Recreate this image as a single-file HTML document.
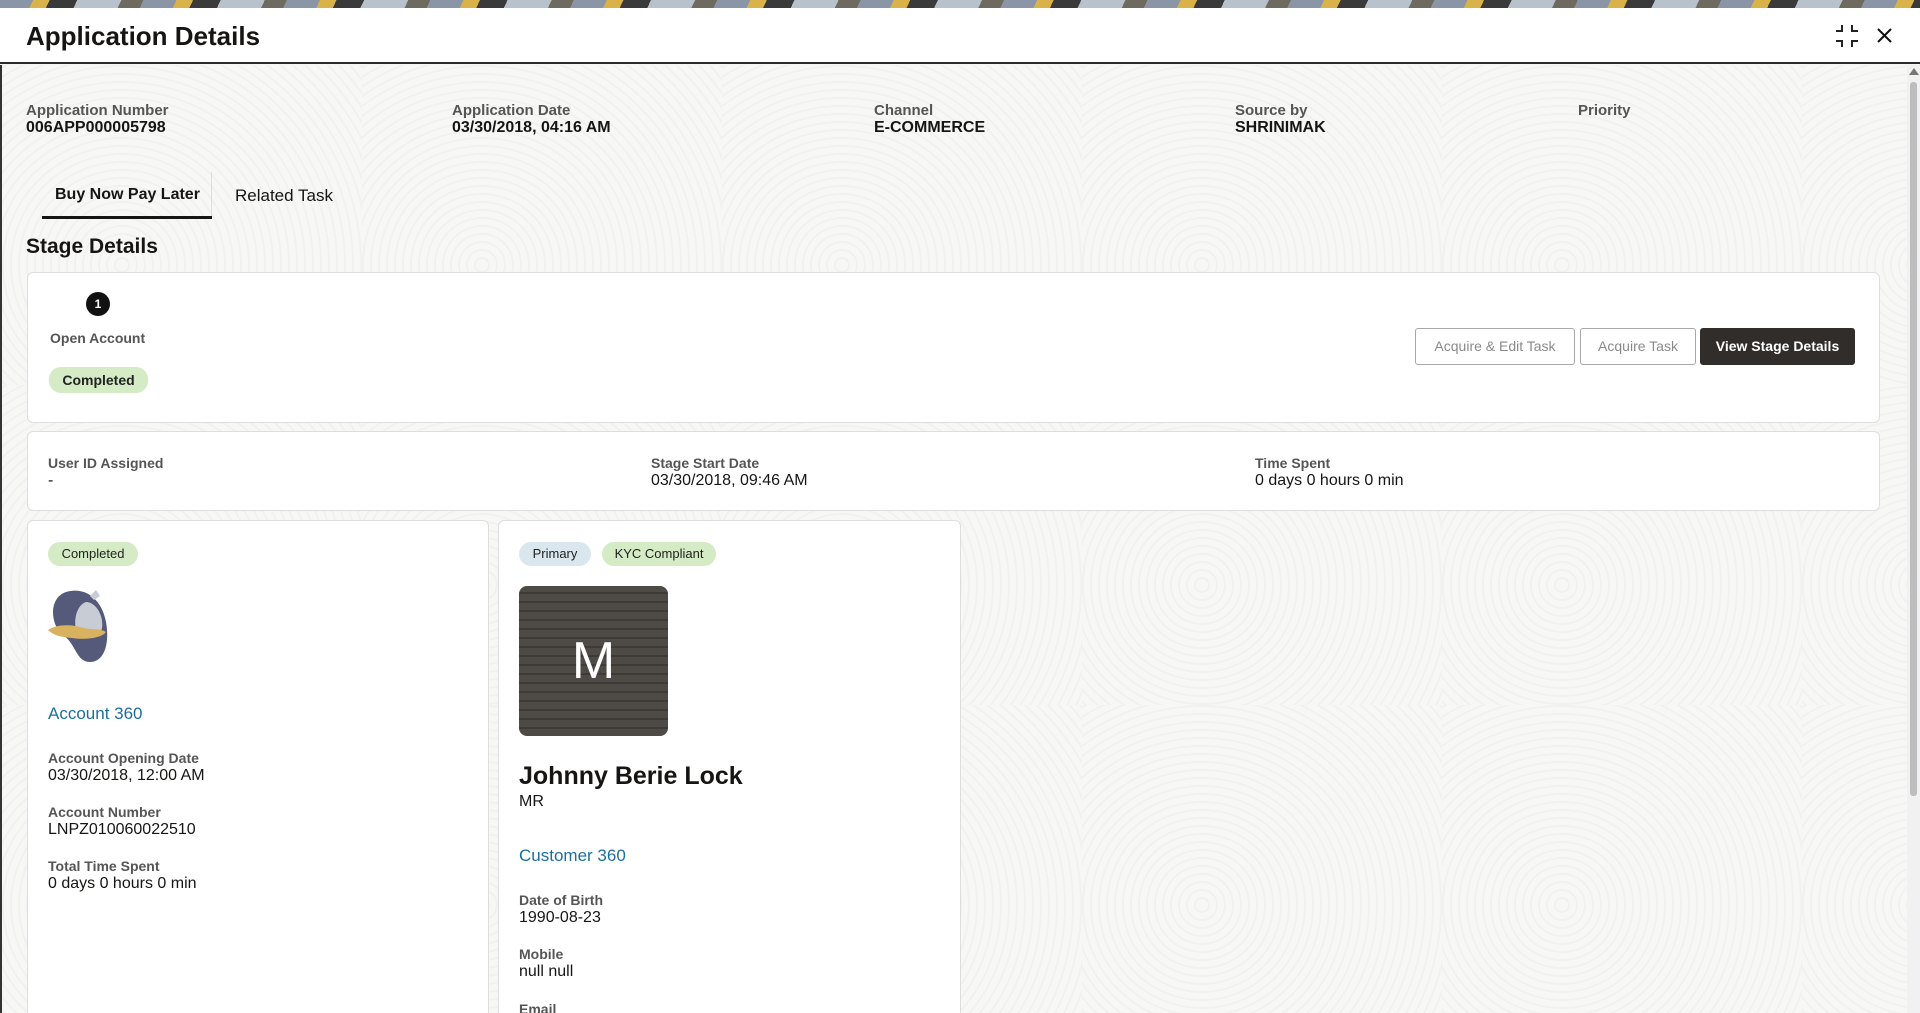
<!DOCTYPE html>
<html><head><meta charset="utf-8">
<style>
*{margin:0;padding:0;box-sizing:border-box}
html{width:1920px;height:1013px;overflow:hidden}
body{width:1920px;height:1013px;overflow:hidden;position:relative;font-family:"Liberation Sans",sans-serif;color:#161513;background:#f6f6f5}
.a{position:absolute;white-space:nowrap}
.strip{left:0;top:0;width:1920px;height:9px;background:repeating-linear-gradient(115deg,#8a96a6 0 30px,#d9b34a 30px 45px,#3a3a3a 45px 70px,#b8c2cc 70px 110px,#6f6a60 110px 130px)}
.hdr{left:0;top:8px;width:1920px;height:56px;background:#fff;border-bottom:2px solid #2b2b2b}
.bodybg{left:0;top:65px;width:1907px;height:948px;border-left:2px solid #333;
background:
repeating-radial-gradient(circle at 120px 200px,rgba(0,0,0,0) 0 6px,rgba(0,0,0,.025) 6px 8px),
#f7f7f6;background-size:360px 320px}
.lbl{font-size:15px;font-weight:bold;color:#555}
.val{font-size:16px;font-weight:bold;color:#161513}
.val2{font-size:16px;color:#161513}
.card{background:#fff;border:1px solid #dedede;border-radius:6px}
.pill{border-radius:12px;font-size:13px;text-align:center;line-height:24px;color:#222}
.btn{height:37px;border:1px solid #a8a8a8;border-radius:3px;background:#fff;color:#8a8a8a;font-size:14px;line-height:35px;text-align:center}
.link{font-size:17px;color:#1d6e9e}
</style></head><body>
<div class="a strip"></div>
<div class="a hdr"></div>
<div class="a" style="left:26px;top:21px;font-size:26px;font-weight:bold">Application Details</div>
<svg class="a" style="left:1834px;top:23px" width="26" height="26" viewBox="0 0 26 26"><path d="M8 2v6H2M18 2v6h6M8 24v-6H2M18 24v-6h6" fill="none" stroke="#222" stroke-width="2"/></svg>
<svg class="a" style="left:1876px;top:27px" width="17" height="17" viewBox="0 0 17 17"><path d="M2 2l13 13M15 2L2 15" stroke="#111" stroke-width="2"/></svg>
<div class="a bodybg"></div>
<div class="a" style="left:1907px;top:65px;width:13px;height:948px;background:#f1f1f1"></div>
<div class="a" style="left:1910px;top:82px;width:7px;height:714px;background:#bdbdbd;border-radius:3px"></div>
<div class="a" style="left:1909px;top:68px;width:0;height:0;border-left:5px solid transparent;border-right:5px solid transparent;border-bottom:7px solid #777"></div>

<div class="a lbl" style="left:26px;top:102px">Application Number</div>
<div class="a val" style="left:26px;top:119px">006APP000005798</div>
<div class="a lbl" style="left:452px;top:102px">Application Date</div>
<div class="a val" style="left:452px;top:119px">03/30/2018, 04:16 AM</div>
<div class="a lbl" style="left:874px;top:102px">Channel</div>
<div class="a val" style="left:874px;top:119px">E-COMMERCE</div>
<div class="a lbl" style="left:1235px;top:102px">Source by</div>
<div class="a val" style="left:1235px;top:119px">SHRINIMAK</div>
<div class="a lbl" style="left:1578px;top:102px">Priority</div>

<div class="a" style="left:55px;top:186px;font-size:16px;font-weight:bold">Buy Now Pay Later</div>
<div class="a" style="left:235px;top:186px;font-size:17px">Related Task</div>
<div class="a" style="left:42px;top:216px;width:170px;height:3px;background:#161513"></div>
<div class="a" style="left:211px;top:172px;width:1px;height:44px;background:#ddd"></div>
<div class="a" style="left:26px;top:235px;font-size:21px;font-weight:bold">Stage Details</div>

<div class="a card" style="left:27px;top:272px;width:1853px;height:151px"></div>
<div class="a" style="left:86px;top:292px;width:24px;height:24px;border-radius:50%;background:#111;color:#fff;font-size:12px;font-weight:bold;text-align:center;line-height:24px">1</div>
<div class="a" style="left:50px;top:330px;font-size:14px;font-weight:bold;color:#555">Open Account</div>
<div class="a pill" style="left:49px;top:367px;width:99px;height:26px;line-height:26px;background:#d4ebc5;font-size:14px;font-weight:bold">Completed</div>
<div class="a btn" style="left:1415px;top:328px;width:160px">Acquire &amp; Edit Task</div>
<div class="a btn" style="left:1580px;top:328px;width:116px">Acquire Task</div>
<div class="a btn" style="left:1700px;top:328px;width:155px;background:#312d2a;border-color:#312d2a;color:#fff;font-weight:bold">View Stage Details</div>

<div class="a card" style="left:27px;top:431px;width:1853px;height:80px"></div>
<div class="a lbl" style="left:48px;top:455px;font-size:14px">User ID Assigned</div>
<div class="a val2" style="left:48px;top:472px">-</div>
<div class="a lbl" style="left:651px;top:455px;font-size:14px">Stage Start Date</div>
<div class="a val2" style="left:651px;top:472px">03/30/2018, 09:46 AM</div>
<div class="a lbl" style="left:1255px;top:455px;font-size:14px">Time Spent</div>
<div class="a val2" style="left:1255px;top:472px">0 days 0 hours 0 min</div>

<div class="a card" style="left:27px;top:520px;width:462px;height:500px"></div>
<div class="a card" style="left:498px;top:520px;width:463px;height:500px"></div>

<div class="a pill" style="left:48px;top:542px;width:90px;background:#d4ebc5">Completed</div>
<svg class="a" style="left:46px;top:586px" width="78" height="78" viewBox="0 0 78 78">
<path d="M20 6C40 0 56 14 60 36C64 58 58 76 44 76C30 76 30 58 18 50C4 40 2 12 20 6Z" fill="#55597a"/>
<path d="M44 10l6-6 4 6-6 4zM40 16c10 0 18 14 16 26-2 10-14 12-22 8-8-6-6-30 6-34z" fill="#c7ccd5"/>
<path d="M2 44c8-6 24-6 36-2 8 2 16 0 22 4-4 6-20 8-34 6-10-1-18-2-24-8z" fill="#d8b25e"/>
</svg>
<div class="a link" style="left:48px;top:704px">Account 360</div>
<div class="a lbl" style="left:48px;top:750px;font-size:14px">Account Opening Date</div>
<div class="a val2" style="left:48px;top:767px">03/30/2018, 12:00 AM</div>
<div class="a lbl" style="left:48px;top:804px;font-size:14px">Account Number</div>
<div class="a val2" style="left:48px;top:821px">LNPZ010060022510</div>
<div class="a lbl" style="left:48px;top:858px;font-size:14px">Total Time Spent</div>
<div class="a val2" style="left:48px;top:875px">0 days 0 hours 0 min</div>

<div class="a pill" style="left:519px;top:542px;width:72px;background:#dbe7ef">Primary</div>
<div class="a pill" style="left:602px;top:542px;width:114px;background:#d4ebc5">KYC Compliant</div>
<div class="a" style="left:519px;top:586px;width:149px;height:150px;border-radius:8px;background:repeating-linear-gradient(0deg,#4e4a45 0 7px,#3e3a36 7px 9px);color:#fff;font-size:52px;font-weight:300;text-align:center;line-height:150px">M</div>
<div class="a" style="left:519px;top:762px;font-size:25px;font-weight:bold">Johnny Berie Lock</div>
<div class="a val2" style="left:519px;top:793px">MR</div>
<div class="a link" style="left:519px;top:846px">Customer 360</div>
<div class="a lbl" style="left:519px;top:892px;font-size:14px">Date of Birth</div>
<div class="a val2" style="left:519px;top:909px">1990-08-23</div>
<div class="a lbl" style="left:519px;top:946px;font-size:14px">Mobile</div>
<div class="a val2" style="left:519px;top:963px">null null</div>
<div class="a lbl" style="left:519px;top:1001px;font-size:14px">Email</div>
</body></html>
